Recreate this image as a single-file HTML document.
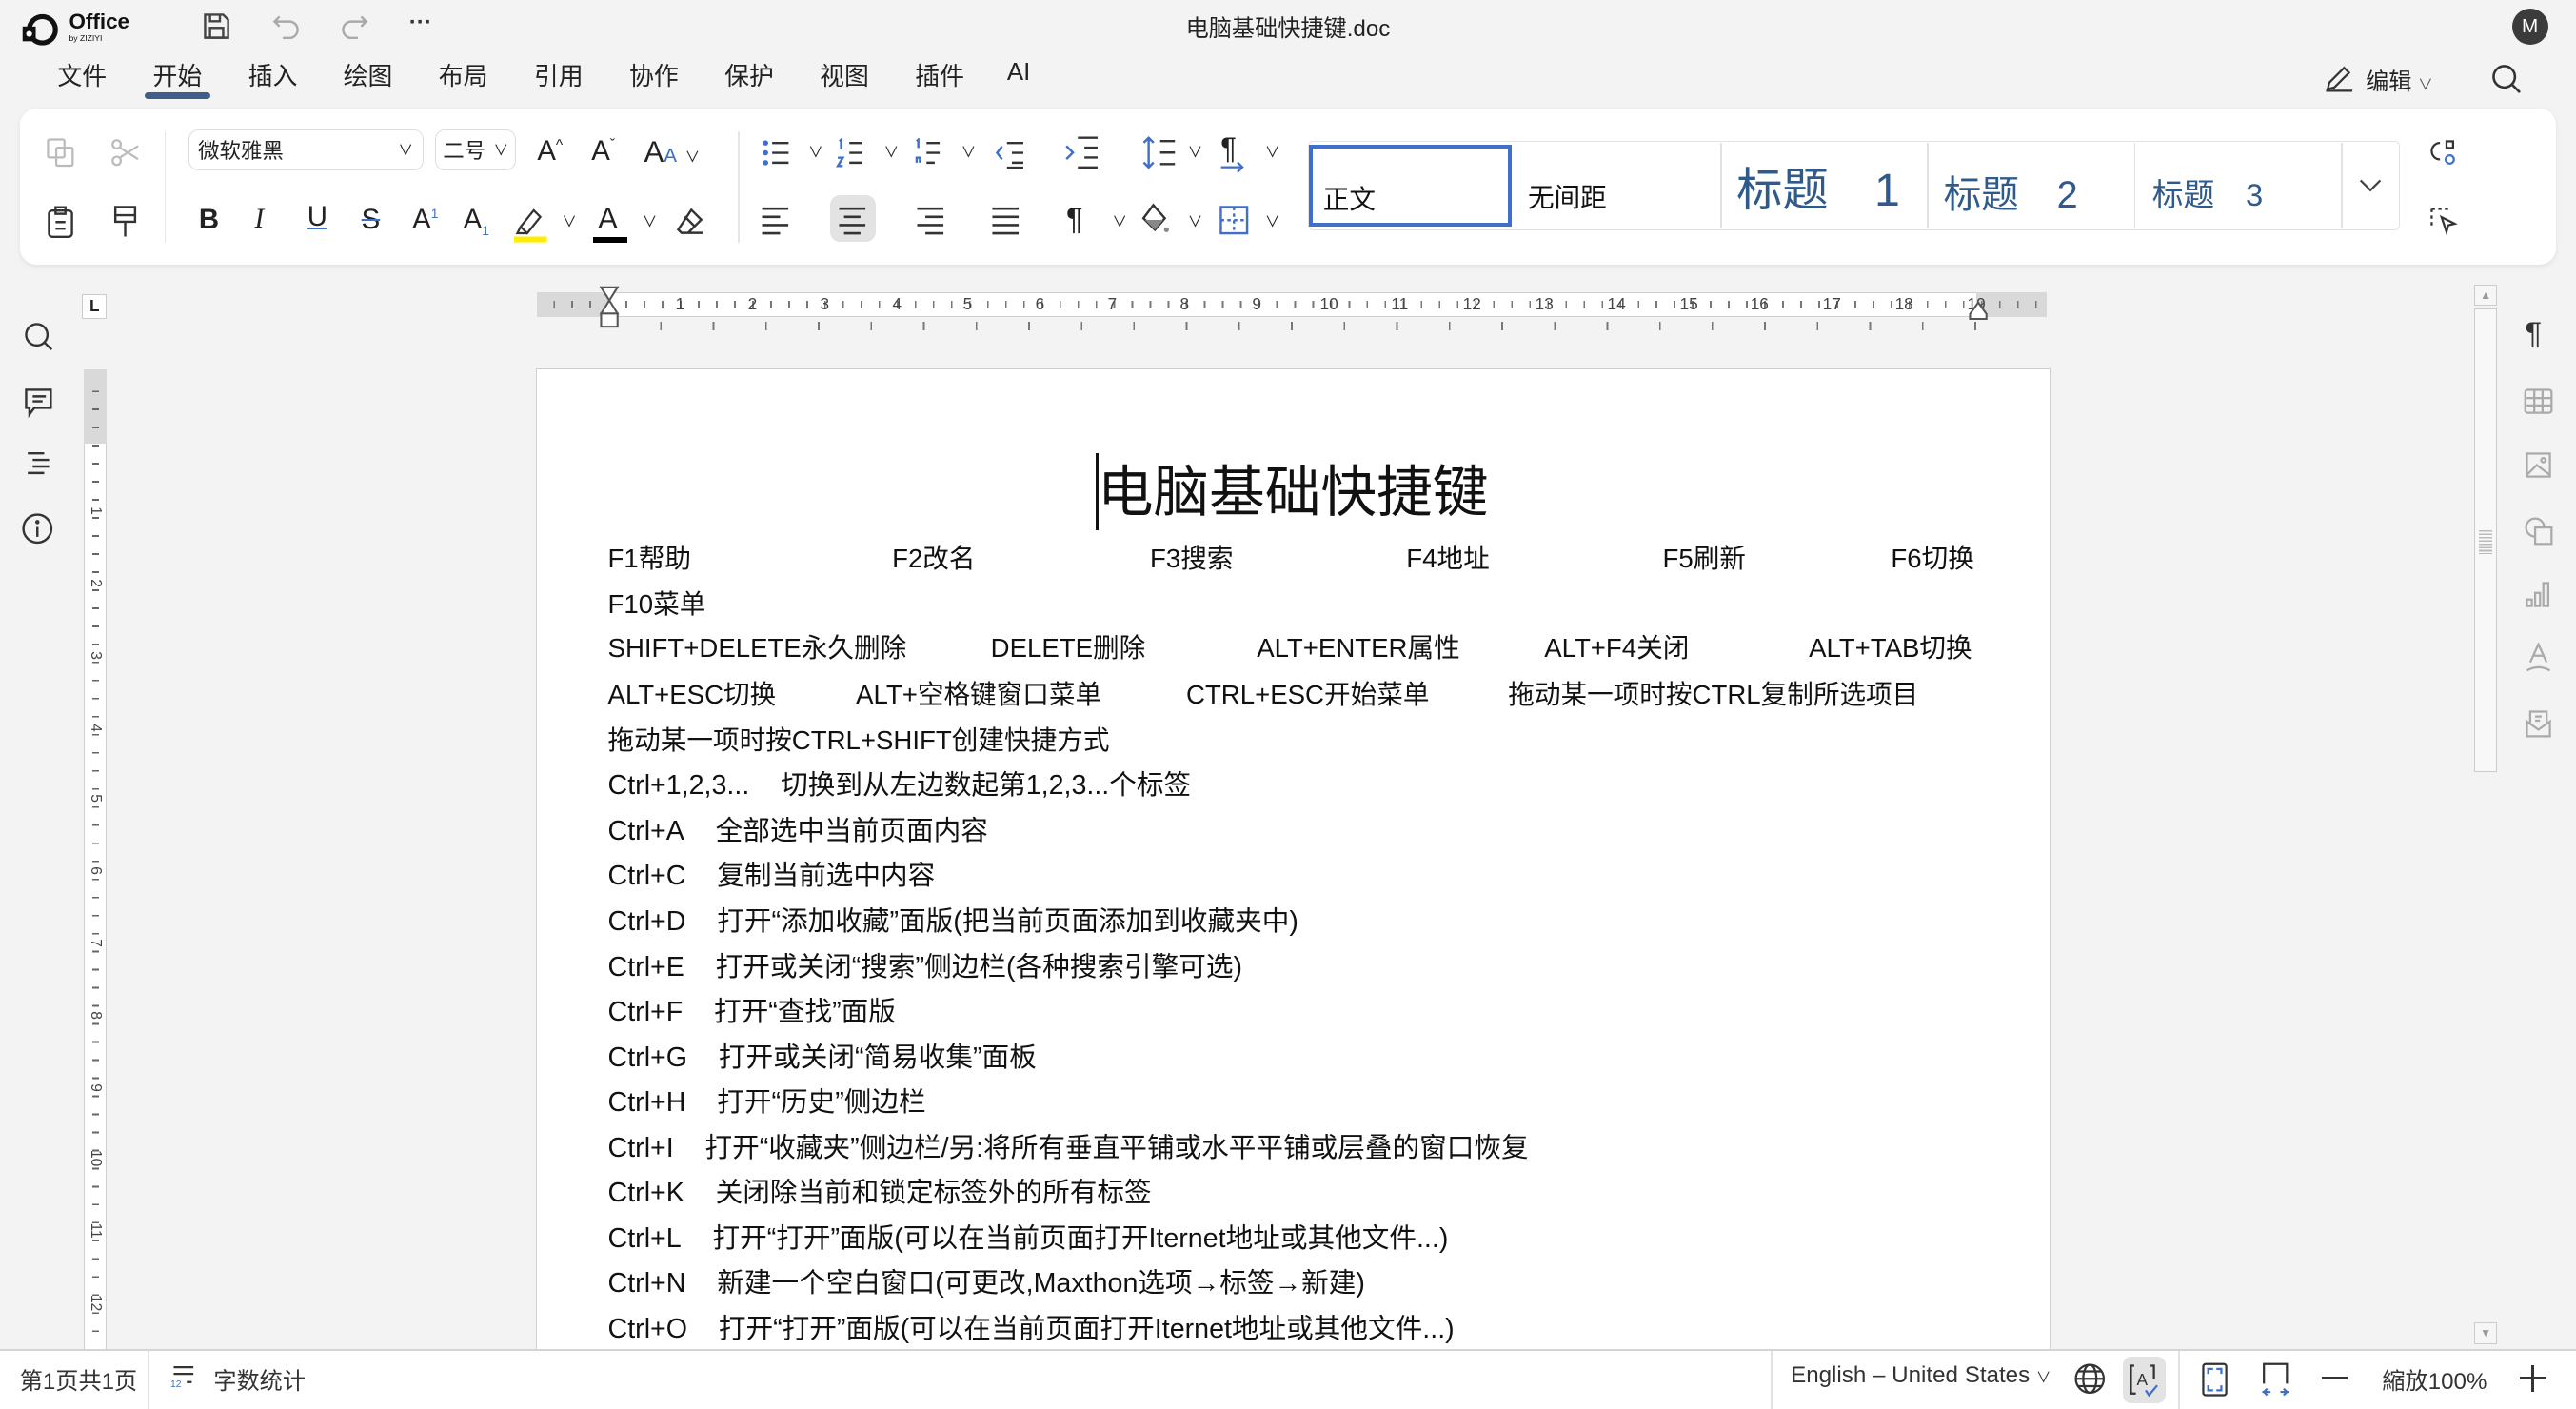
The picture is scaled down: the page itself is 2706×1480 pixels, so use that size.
<!DOCTYPE html>
<html><head><meta charset="utf-8">
<style>
html,body{margin:0;padding:0;width:2706px;height:1480px;overflow:hidden;background:#f3f3f3}
#w{zoom:1.72577;width:1568px;height:858px;position:relative;font-family:"Liberation Sans","Noto Sans CJK SC",sans-serif;color:#222}
.a{position:absolute;white-space:nowrap}
.menu span{position:absolute;top:35px;font-size:15px;color:#222}
.ic{position:absolute}
.t{position:absolute;font-size:16.6px;color:#111;white-space:nowrap;line-height:20px}
.s{font-size:16px}
.g{display:inline-block;width:19px}
.rn{position:absolute;top:179px;font-size:10px;color:#444;width:12px;text-align:center}
.vn{position:absolute;left:52px;width:12px;font-size:9px;color:#444;text-align:center;transform:rotate(90deg);line-height:10px}
.si{position:absolute;left:1536px;width:18px;height:18px}
</style></head><body><div id="w">

<svg class="ic" style="left:13px;top:8px" width="24" height="20" viewBox="0 0 24 20"><circle cx="13" cy="10" r="8" fill="none" stroke="#111" stroke-width="3"/><rect x="1" y="8" width="8" height="9" fill="#111"/><circle cx="5" cy="12.5" r="1.8" fill="#fff"/></svg>
<div class="a" style="left:42px;top:6px;font-size:13px;font-weight:bold;color:#111">Office</div>
<div class="a" style="left:42px;top:20px;font-size:5px;color:#111">by ZIZIYI</div>
<svg class="ic" style="left:123px;top:7px" width="18" height="18" viewBox="0 0 18 18" fill="none" stroke="#444" stroke-width="1.4"><path d="M2 2h11l3 3v11H2z"/><rect x="5" y="10" width="8" height="6"/><path d="M5 2v4h6V2"/></svg>
<svg class="ic" style="left:165px;top:8px" width="18" height="16" viewBox="0 0 18 16" fill="none" stroke="#aaa" stroke-width="1.4"><path d="M5 2L2 5l3 3M2 5h9a5 5 0 010 10H7"/></svg>
<svg class="ic" style="left:207px;top:8px" width="18" height="16" viewBox="0 0 18 16" fill="none" stroke="#aaa" stroke-width="1.4"><path d="M13 2l3 3-3 3M16 5H7a5 5 0 000 10h4"/></svg>
<div class="a" style="left:249px;top:6px;font-size:14px;color:#333;font-weight:bold">···</div>
<div class="a" style="left:0;width:1568px;text-align:center;top:6px;font-size:14px;color:#222">电脑基础快捷键.doc</div>
<div class="a" style="left:1529px;top:5px;width:22px;height:22px;border-radius:50%;background:#3b3b3b;color:#fff;font-size:12px;text-align:center;line-height:22px">M</div>

<div class="menu">
<span style="left:35px">文件</span><span style="left:93px">开始</span><span style="left:151px">插入</span><span style="left:209px">绘图</span><span style="left:267px">布局</span><span style="left:325px">引用</span><span style="left:383px">协作</span><span style="left:441px">保护</span><span style="left:499px">视图</span><span style="left:557px">插件</span><span style="left:613px;top:36px">AI</span>
</div>
<div class="a" style="left:88px;top:56px;width:40px;height:4px;border-radius:2px;background:#3f5f8a"></div>
<svg class="ic" style="left:1414px;top:38px" width="20" height="18" viewBox="0 0 20 18" fill="none" stroke="#333" stroke-width="1.3"><path d="M3 16l1-4 9-9 3 3-9 9zM2 17h16"/></svg>
<div class="a" style="left:1440px;top:38px;font-size:14px">编辑 <span style="font-size:9px;color:#555">∨</span></div>
<svg class="ic" style="left:1516px;top:38px" width="20" height="20" viewBox="0 0 20 20" fill="none" stroke="#333" stroke-width="1.5"><circle cx="8.5" cy="8.5" r="6.5"/><path d="M13.5 13.5l4.5 4.5"/></svg>

<div class="a" style="left:12px;top:66px;width:1544px;height:95px;background:#fff;border-radius:10px;box-shadow:0 1px 3px rgba(0,0,0,.08)"></div>
<div class="a" style="left:100px;top:80px;width:1px;height:68px;background:#e6e6e6"></div>
<div class="a" style="left:449px;top:80px;width:1px;height:68px;background:#e6e6e6"></div>
<svg class="ic" style="left:27px;top:83px" width="20" height="20" viewBox="0 0 20 20" fill="none" stroke="#bbb" stroke-width="1.3"><rect x="2" y="2" width="10" height="11" rx="1"/><rect x="7" y="7" width="10" height="11" rx="1"/></svg>
<svg class="ic" style="left:66px;top:83px" width="20" height="20" viewBox="0 0 20 20" fill="none" stroke="#bbb" stroke-width="1.3"><circle cx="5" cy="5" r="2.5"/><circle cx="5" cy="15" r="2.5"/><path d="M7 7l11 7M7 13l11-7"/></svg>
<svg class="ic" style="left:28px;top:125px" width="18" height="20" viewBox="0 0 18 20" fill="none" stroke="#333" stroke-width="1.4"><rect x="2" y="3" width="14" height="16" rx="2"/><rect x="6" y="1" width="6" height="4"/><path d="M6 10h6M6 14h6"/></svg>
<svg class="ic" style="left:67px;top:124px" width="18" height="22" viewBox="0 0 18 22" fill="none" stroke="#333" stroke-width="1.4"><path d="M3 2h12v9H3zM3 7h12M9 11v9"/></svg>
<div class="a" style="left:115px;top:79px;width:143px;height:25px;border:1px solid #ddd;border-radius:6px;font-size:13px;line-height:25px;padding-left:5px;box-sizing:border-box">微软雅黑<span style="position:absolute;right:6px;font-size:9px">∨</span></div>
<div class="a" style="left:265px;top:79px;width:49px;height:25px;border:1px solid #ddd;border-radius:6px;font-size:13px;line-height:25px;padding-left:4px;box-sizing:border-box">二号<span style="position:absolute;right:4px;font-size:9px">∨</span></div>
<div class="a" style="left:327px;top:82px;font-size:17px">A<sup style="font-size:9px">^</sup></div>
<div class="a" style="left:360px;top:82px;font-size:17px">A<sup style="font-size:9px">ˇ</sup></div>
<div class="a" style="left:392px;top:82px;font-size:18px">A<span style="font-size:12px;color:#3f6fc9">A</span> <span style="font-size:9px">∨</span></div>
<div class="a" style="left:121px;top:124px;font-size:17px;font-weight:bold">B</div>
<div class="a" style="left:155px;top:124px;font-size:17px;font-style:italic;font-family:'Liberation Serif',serif">I</div>
<div class="a" style="left:187px;top:122px;font-size:17px;text-decoration:underline;text-decoration-color:#3f6fc9">U</div>
<div class="a" style="left:220px;top:124px;font-size:17px;text-decoration:line-through;text-decoration-color:#3f6fc9">S</div>
<div class="a" style="left:251px;top:124px;font-size:17px">A<sup style="font-size:8px;color:#3f6fc9">1</sup></div>
<div class="a" style="left:282px;top:124px;font-size:17px">A<sub style="font-size:8px;color:#3f6fc9">1</sub></div>
<svg class="ic" style="left:313px;top:124px" width="20" height="24" viewBox="0 0 20 24" fill="none" stroke="#333" stroke-width="1.3"><path d="M4 14l8-10 4 4-8 10zM4 14l-2 4h6"/><rect x="0" y="20" width="20" height="3.5" fill="#ffee00" stroke="none"/></svg>
<div class="a" style="left:342px;top:128px;font-size:9px">∨</div>
<div class="a" style="left:364px;top:123px;font-size:18px">A</div>
<div class="a" style="left:361px;top:144px;width:21px;height:3.5px;background:#000"></div>
<div class="a" style="left:391px;top:128px;font-size:9px">∨</div>
<svg class="ic" style="left:411px;top:126px" width="18" height="18" viewBox="0 0 18 18" fill="none" stroke="#333" stroke-width="1.4"><path d="M10 2l6 6-8 8H4l-2-2zM6 6l6 6M8 16h9"/></svg>
<svg class="ic" style="left:463px;top:84px" width="160" height="20" viewBox="0 0 160 20" fill="none" stroke-width="1.4"><g stroke="#333"><path d="M7 3h10M7 9h10M7 15h10"/><path d="M54 3h8M54 9h8M54 15h8"/><path d="M101 3h8M101 9h8M101 15h5"/><path d="M150 3h10M153 9h7M153 15h7M150 18h10"/></g><g fill="#3f6fc9" stroke="none"><circle cx="3" cy="3" r="1.6"/><circle cx="3" cy="9" r="1.6"/><circle cx="3" cy="15" r="1.6"/></g><path d="M48 2l1-1v6M47 12h3l-3 5h3M95 2l1-1v5M95 15v-3h2v3M147 5l-3 4 3 4" stroke="#3f6fc9"/></svg>
<div class="a" style="left:492px;top:86px;font-size:9px">∨</div>
<div class="a" style="left:538px;top:86px;font-size:9px">∨</div>
<div class="a" style="left:585px;top:86px;font-size:9px">∨</div>
<svg class="ic" style="left:646px;top:83px" width="22" height="20" viewBox="0 0 22 20" fill="none" stroke-width="1.4"><path d="M10 1h12M14 7h8M14 13h8M10 19h12" stroke="#333"/><path d="M3 6l4 4-4 4" stroke="#3f6fc9"/></svg>
<svg class="ic" style="left:694px;top:83px" width="22" height="20" viewBox="0 0 22 20" fill="none" stroke-width="1.4"><path d="M12 3h9M12 10h9M12 17h9" stroke="#333"/><path d="M5 1v18M2 4l3-3 3 3M2 16l3 3 3-3" stroke="#3f6fc9"/></svg>
<div class="a" style="left:723px;top:86px;font-size:9px">∨</div>
<div class="a" style="left:743px;top:80px;font-size:18px">¶</div>
<svg class="ic" style="left:742px;top:97px" width="20" height="8"><path d="M1 5h13M11 2l3 3-3 3" stroke="#3f6fc9" fill="none" stroke-width="1.3"/></svg>
<div class="a" style="left:770px;top:86px;font-size:9px">∨</div>
<svg class="ic" style="left:462px;top:124px" width="170" height="20" viewBox="0 0 170 20" fill="none" stroke="#333" stroke-width="1.5"><path d="M2 3h16M2 8h11M2 13h16M2 18h11"/></svg>
<div class="a" style="left:505px;top:119px;width:28px;height:28px;border-radius:6px;background:#e3e3e3"></div>
<svg class="ic" style="left:509px;top:124px" width="20" height="20" fill="none" stroke="#333" stroke-width="1.5"><path d="M2 3h16M5 8h10M2 13h16M5 18h10"/></svg>
<svg class="ic" style="left:556px;top:124px" width="20" height="20" fill="none" stroke="#333" stroke-width="1.5"><path d="M2 3h16M7 8h11M2 13h16M7 18h11"/></svg>
<svg class="ic" style="left:602px;top:124px" width="20" height="20" fill="none" stroke="#333" stroke-width="1.5"><path d="M2 3h16M2 8h16M2 13h16M2 18h16"/></svg>
<div class="a" style="left:649px;top:122px;font-size:19px">¶</div>
<div class="a" style="left:677px;top:128px;font-size:9px">∨</div>
<svg class="ic" style="left:693px;top:123px" width="20" height="22" viewBox="0 0 20 22" fill="none" stroke="#333" stroke-width="1.4"><path d="M9 2l7 8-6 7-7-7z"/><path d="M4 11h11l-5 6z" fill="#888" stroke="none"/><circle cx="17" cy="17" r="1.5" fill="#888" stroke="none"/></svg>
<div class="a" style="left:723px;top:128px;font-size:9px">∨</div>
<svg class="ic" style="left:741px;top:124px" width="20" height="20" fill="none" stroke="#3f6fc9" stroke-width="1.4"><rect x="2" y="2" width="16" height="16"/><path d="M10 2v16M2 10h16" stroke-dasharray="2 2"/></svg>
<div class="a" style="left:770px;top:128px;font-size:9px">∨</div>
<div class="a" style="left:796px;top:86px;width:665px;height:54px;border:1px solid #e2e2e2;border-radius:3px;box-sizing:border-box"></div>
<div class="a" style="left:797px;top:88px;width:123px;height:50px;border:2.5px solid #3f6fc9;box-sizing:border-box;font-size:16px;padding:18px 0 0 6px;color:#111">正文</div>
<div class="a" style="left:930px;top:107px;font-size:16px;color:#111">无间距</div>
<div class="a" style="left:1047px;top:87px;width:1px;height:52px;background:#e2e2e2"></div>
<div class="a" style="left:1173px;top:87px;width:1px;height:52px;background:#e2e2e2"></div>
<div class="a" style="left:1299px;top:87px;width:1px;height:52px;background:#e2e2e2"></div>
<div class="a" style="left:1425px;top:87px;width:1px;height:52px;background:#e2e2e2"></div>
<div class="a" style="left:1057px;top:93px;font-size:28px;color:#2f5a8c">标题　1</div>
<div class="a" style="left:1183px;top:100px;font-size:23px;color:#2f5a8c">标题　2</div>
<div class="a" style="left:1310px;top:104px;font-size:19px;color:#2f5a8c">标题　3</div>
<svg class="ic" style="left:1436px;top:108px" width="14" height="10"><path d="M1 2l6 6 6-6" stroke="#444" fill="none" stroke-width="1.3"/></svg>
<svg class="ic" style="left:1478px;top:84px" width="18" height="18" viewBox="0 0 18 18" fill="none" stroke-width="1.3"><path d="M7 3a5 5 0 100 10" stroke="#333"/><rect x="11" y="2" width="4" height="4" stroke="#333"/><circle cx="13" cy="13" r="2.5" stroke="#3f6fc9"/></svg>
<svg class="ic" style="left:1478px;top:125px" width="18" height="18" viewBox="0 0 18 18" fill="none" stroke="#333" stroke-width="1.3"><path d="M2 2h10M2 2v10" stroke-dasharray="2 2"/><path d="M8 7l8 4-4 1-1 4z"/></svg>

<svg class="ic" style="left:14px;top:195px" width="20" height="20" fill="none" stroke="#333" stroke-width="1.4"><circle cx="8.5" cy="8.5" r="6.5"/><path d="M13.5 13.5l4 4"/></svg>
<svg class="ic" style="left:14px;top:235px" width="20" height="20" fill="none" stroke="#333" stroke-width="1.4"><path d="M2 2h15v11H7l-3 4v-4H2z"/><path d="M6 6h8M6 9h6"/></svg>
<svg class="ic" style="left:14px;top:273px" width="20" height="20" fill="none" stroke="#333" stroke-width="1.4"><path d="M3 3h10M6 7h10M6 11h10M3 15h10"/></svg>
<svg class="ic" style="left:13px;top:312px" width="20" height="20" fill="none" stroke="#333" stroke-width="1.4"><circle cx="10" cy="10" r="8.5"/><path d="M10 9v6"/><circle cx="10" cy="6" r=".6"/></svg>

<div class="a" style="left:50px;top:179px;width:15px;height:15px;border:1px solid #ccc;background:#fff;box-sizing:border-box;font-size:10px;font-weight:bold;text-align:center;line-height:13px">L</div>
<div class="a" style="left:327px;top:178px;width:919px;height:15px;background:#fff;border:1px solid #cfcfcf;box-sizing:border-box"></div>
<div class="a" style="left:327px;top:178px;width:44px;height:15px;background:#d9d9d9"></div>
<div class="a" style="left:1203px;top:178px;width:43px;height:15px;background:#d9d9d9"></div>
<div class="a" style="left:327px;top:183px;width:919px;height:5px;background:repeating-linear-gradient(90deg,transparent 0,transparent 10px,#777 10px,#777 11px)"></div>
<div class="a" style="left:371px;top:196px;width:832px;height:5px;background:repeating-linear-gradient(90deg,transparent 0,transparent 31px,#777 31px,#777 32px)"></div>
<div class="rn" style="left:408px">1</div><div class="rn" style="left:452px">2</div><div class="rn" style="left:496px">3</div><div class="rn" style="left:540px">4</div><div class="rn" style="left:583px">5</div><div class="rn" style="left:627px">6</div><div class="rn" style="left:671px">7</div><div class="rn" style="left:715px">8</div><div class="rn" style="left:759px">9</div><div class="rn" style="left:803px">10</div><div class="rn" style="left:846px">11</div><div class="rn" style="left:890px">12</div><div class="rn" style="left:934px">13</div><div class="rn" style="left:978px">14</div><div class="rn" style="left:1022px">15</div><div class="rn" style="left:1065px">16</div><div class="rn" style="left:1109px">17</div><div class="rn" style="left:1153px">18</div><div class="rn" style="left:1197px">19</div>
<svg class="ic" style="left:364px;top:174px" width="14" height="26"><path d="M2 1h10L7 9zM7 9l5 8H2z M2 17h10v8H2z" fill="#fff" stroke="#555" stroke-width="1.2"/></svg>
<svg class="ic" style="left:1197px;top:183px" width="14" height="12"><path d="M7 1l5 7v3H2V8z" fill="#fff" stroke="#555" stroke-width="1.2"/></svg>
<div class="a" style="left:51px;top:225px;width:14px;height:600px;background:#fff;border:1px solid #cfcfcf;box-sizing:border-box"></div>
<div class="a" style="left:51px;top:225px;width:14px;height:45px;background:#d9d9d9"></div>
<div class="a" style="left:56px;top:228px;width:4px;height:592px;background:repeating-linear-gradient(180deg,transparent 0,transparent 10px,#666 10px,#666 11px)"></div>
<div class="vn" style="top:306px">1</div><div class="vn" style="top:350px">2</div><div class="vn" style="top:394px">3</div><div class="vn" style="top:438px">4</div><div class="vn" style="top:481px">5</div><div class="vn" style="top:525px">6</div><div class="vn" style="top:569px">7</div><div class="vn" style="top:613px">8</div><div class="vn" style="top:657px">9</div><div class="vn" style="top:700px">10</div><div class="vn" style="top:744px">11</div><div class="vn" style="top:788px">12</div>

<div class="a" style="left:326px;top:224px;width:922px;height:610px;background:#fff;border:1px solid #cfcfcf;box-sizing:border-box"></div>
<div class="a" style="left:667px;top:276px;width:1.5px;height:47px;background:#111"></div>
<div class="a" style="left:668px;top:272px;font-size:34px;color:#111">电脑基础快捷键</div>
<div class="t s" style="left:370px;top:330px">F1帮助</div><div class="t s" style="left:543px;top:330px">F2改名</div><div class="t s" style="left:700px;top:330px">F3搜索</div><div class="t s" style="left:856px;top:330px">F4地址</div><div class="t s" style="left:1012px;top:330px">F5刷新</div><div class="t s" style="left:1151px;top:330px">F6切换</div>
<div class="t s" style="left:370px;top:358px">F10菜单</div>
<div class="t s" style="left:370px;top:385px">SHIFT+DELETE永久删除</div><div class="t s" style="left:603px;top:385px">DELETE删除</div><div class="t s" style="left:765px;top:385px">ALT+ENTER属性</div><div class="t s" style="left:940px;top:385px">ALT+F4关闭</div><div class="t s" style="left:1101px;top:385px">ALT+TAB切换</div>
<div class="t s" style="left:370px;top:413px">ALT+ESC切换</div><div class="t s" style="left:521px;top:413px">ALT+空格键窗口菜单</div><div class="t s" style="left:722px;top:413px">CTRL+ESC开始菜单</div><div class="t s" style="left:918px;top:413px">拖动某一项时按CTRL复制所选项目</div>
<div class="t s" style="left:370px;top:441px">拖动某一项时按CTRL+SHIFT创建快捷方式</div>
<div class="t" style="left:370px;top:468px">Ctrl+1,2,3...<span class="g"></span>切换到从左边数起第1,2,3...个标签</div>
<div class="t" style="left:370px;top:496px">Ctrl+A<span class="g"></span>全部选中当前页面内容</div>
<div class="t" style="left:370px;top:523px">Ctrl+C<span class="g"></span>复制当前选中内容</div>
<div class="t" style="left:370px;top:551px">Ctrl+D<span class="g"></span>打开“添加收藏”面版(把当前页面添加到收藏夹中)</div>
<div class="t" style="left:370px;top:579px">Ctrl+E<span class="g"></span>打开或关闭“搜索”侧边栏(各种搜索引擎可选)</div>
<div class="t" style="left:370px;top:606px">Ctrl+F<span class="g"></span>打开“查找”面版</div>
<div class="t" style="left:370px;top:634px">Ctrl+G<span class="g"></span>打开或关闭“简易收集”面板</div>
<div class="t" style="left:370px;top:661px">Ctrl+H<span class="g"></span>打开“历史”侧边栏</div>
<div class="t" style="left:370px;top:689px">Ctrl+I<span class="g"></span>打开“收藏夹”侧边栏/另:将所有垂直平铺或水平平铺或层叠的窗口恢复</div>
<div class="t" style="left:370px;top:716px">Ctrl+K<span class="g"></span>关闭除当前和锁定标签外的所有标签</div>
<div class="t" style="left:370px;top:744px">Ctrl+L<span class="g"></span>打开“打开”面版(可以在当前页面打开Iternet地址或其他文件...)</div>
<div class="t" style="left:370px;top:771px">Ctrl+N<span class="g"></span>新建一个空白窗口(可更改,Maxthon选项→标签→新建)</div>
<div class="t" style="left:370px;top:799px">Ctrl+O<span class="g"></span>打开“打开”面版(可以在当前页面打开Iternet地址或其他文件...)</div>

<div class="a" style="left:1506px;top:173px;width:14px;height:13px;border:1px solid #ccc;box-sizing:border-box;background:#f6f6f6;font-size:7px;color:#999;text-align:center;line-height:12px">▲</div>
<div class="a" style="left:1506px;top:188px;width:14px;height:282px;border:1px solid #ccc;box-sizing:border-box;background:#f8f8f8"></div>
<div class="a" style="left:1509px;top:323px;width:8px;height:14px;background:repeating-linear-gradient(180deg,#bbb 0,#bbb 1px,transparent 1px,transparent 2px)"></div>
<div class="a" style="left:1506px;top:805px;width:14px;height:13px;border:1px solid #ccc;box-sizing:border-box;background:#f6f6f6;font-size:7px;color:#999;text-align:center;line-height:12px">▼</div>
<div class="a" style="left:1537px;top:192px;font-size:19px;color:#333">¶</div>
<svg class="si" style="top:235px" viewBox="0 0 18 18" fill="none" stroke="#aaa" stroke-width="1.3"><rect x="1" y="2" width="16" height="14" rx="1.5"/><path d="M1 7h16M1 11.5h16M6.5 2v14M11.5 2v14"/></svg>
<svg class="si" style="top:274px" viewBox="0 0 18 18" fill="none" stroke="#aaa" stroke-width="1.3"><rect x="2" y="2" width="14" height="14"/><path d="M2 15l6-6 8 6"/><circle cx="12" cy="6" r="1.3"/></svg>
<svg class="si" style="top:314px" viewBox="0 0 18 18" fill="none" stroke="#aaa" stroke-width="1.3"><circle cx="7" cy="7" r="5.5"/><rect x="7" y="7" width="10" height="10" fill="#f3f3f3"/></svg>
<svg class="si" style="top:353px" viewBox="0 0 18 18" fill="none" stroke="#aaa" stroke-width="1.3"><rect x="2" y="12" width="3" height="4"/><rect x="7" y="8" width="3" height="8"/><rect x="12" y="2" width="3" height="14"/></svg>
<svg class="si" style="top:391px" viewBox="0 0 18 18" fill="none" stroke="#aaa" stroke-width="1.3"><path d="M4 12L9 1l5 11M6 8h6M2 17q7-4 14 0"/></svg>
<svg class="si" style="top:431px" viewBox="0 0 18 18" fill="none" stroke="#aaa" stroke-width="1.3"><path d="M2 8v9h14V8l-7 5z"/><path d="M4 9V2h10v7M7 5h4M7 7.5h3"/></svg>

<div class="a" style="left:0;top:821px;width:1568px;height:37px;background:#fff;border-top:1.5px solid #d4d4d4;box-sizing:border-box"></div>
<div class="a" style="left:90px;top:822px;width:1px;height:36px;background:#e2e2e2"></div>
<div class="a" style="left:1078px;top:822px;width:1px;height:36px;background:#e2e2e2"></div>
<div class="a" style="left:1326px;top:822px;width:1px;height:36px;background:#e2e2e2"></div>
<div class="a" style="left:12px;top:829px;font-size:14px;color:#333">第1页共1页</div>
<svg class="ic" style="left:104px;top:829px" width="16" height="16"><path d="M2 3h12M2 7h12M10 12h3" stroke="#333" stroke-width="1.3"/><text x="0" y="15" font-size="6" fill="#3f6fc9" font-family="Liberation Sans">12</text></svg>
<div class="a" style="left:130px;top:829px;font-size:14px;color:#333">字数统计</div>
<div class="a" style="left:1090px;top:829px;font-size:14px;color:#333">English – United States <span style="font-size:9px">∨</span></div>
<svg class="ic" style="left:1262px;top:829px" width="20" height="20" fill="none" stroke="#333" stroke-width="1.3"><circle cx="10" cy="10" r="8.5"/><ellipse cx="10" cy="10" rx="4" ry="8.5"/><path d="M1.5 10h17M3 5.5h14M3 14.5h14"/></svg>
<div class="a" style="left:1292px;top:826px;width:26px;height:28px;border-radius:5px;background:#e3e3e3"></div>
<svg class="ic" style="left:1295px;top:829px" width="20" height="22" fill="none" stroke-width="1.3"><path d="M4 2h-2v17h3M14 2h2v8" stroke="#333"/><text x="5.5" y="14" font-size="10" fill="#333" font-family="Liberation Sans">A</text><path d="M11 17l2 3 5-6" stroke="#3f6fc9"/></svg>
<svg class="ic" style="left:1339px;top:829px" width="18" height="22" fill="none" stroke-width="1.3"><rect x="2" y="1" width="14" height="19" rx="1.5" stroke="#333"/><path d="M5 7V4h3M10 4h3v3M13 14v3h-3M8 17H5v-3" stroke="#3f6fc9"/></svg>
<svg class="ic" style="left:1375px;top:829px" width="20" height="22" fill="none" stroke-width="1.3"><path d="M3 13V1h14v12" stroke="#333"/><path d="M2 18h5M5 16l-2 2 2 2M13 18h5M15 16l2 2-2 2" stroke="#3f6fc9"/></svg>
<div class="a" style="left:1413px;top:838px;width:16px;height:1.5px;background:#333"></div>
<div class="a" style="left:1450px;top:829px;font-size:14px;color:#333">縮放100%</div>
<div class="a" style="left:1534px;top:838px;width:16px;height:1.5px;background:#333"></div>
<div class="a" style="left:1541px;top:831px;width:1.5px;height:16px;background:#333"></div>

</div></body></html>
